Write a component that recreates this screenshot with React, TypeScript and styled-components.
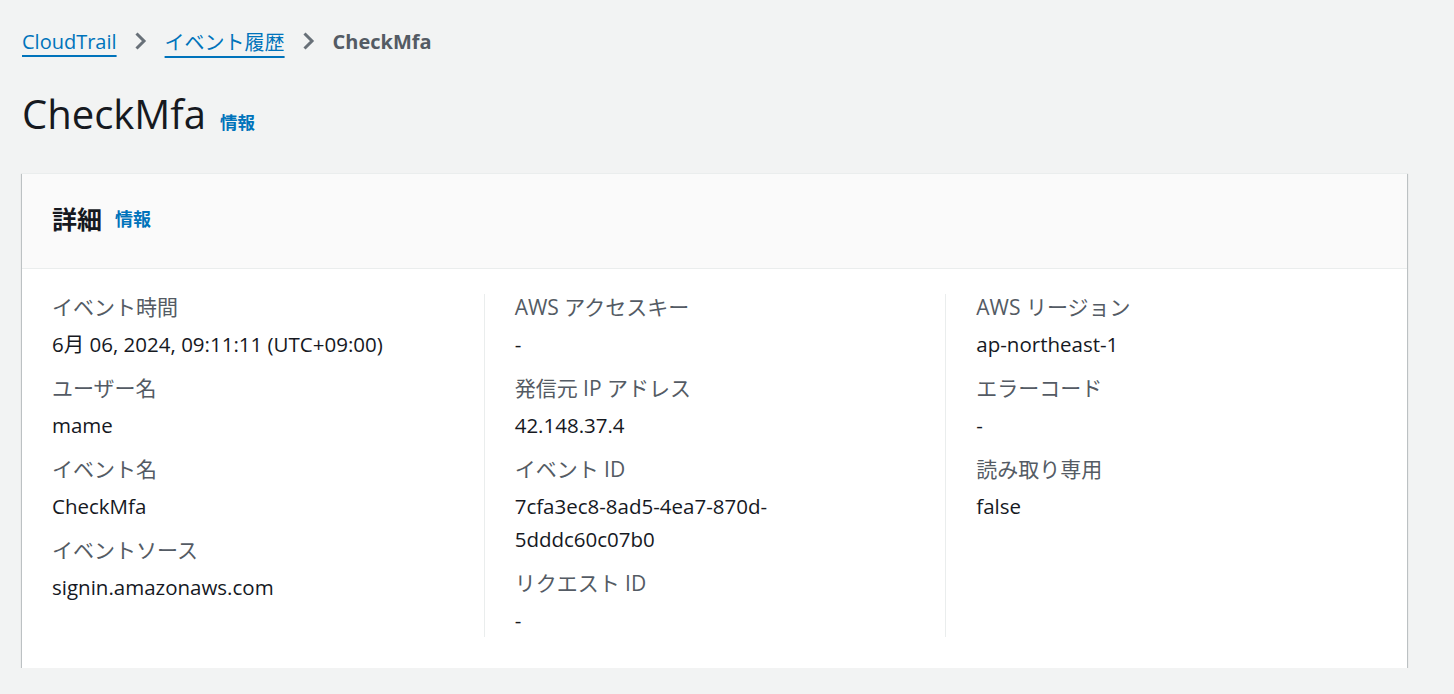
import React from "react";
import styled, { createGlobalStyle } from "styled-components";

const FONT = `"Open Sans", "Noto Sans CJK JP", sans-serif`;

const Global = createGlobalStyle`
  html, body { margin: 0; padding: 0; background: #f2f3f3; }
  body { font-family: ${FONT}; color: #16191f; }
`;

const Page = styled.div`
  padding: 0 47px 0 22px;
  display: flex;
  flex-direction: column;
`;

const Breadcrumbs = styled.nav`
  display: flex;
  align-items: center;
  height: 30px;
  margin-top: 26px;
  font-size: 20px;
  gap: 16px;
`;

const Crumb = styled.a`
  color: #0073bb;
  text-decoration: underline;
  text-decoration-thickness: 2px;
  text-underline-offset: 6px;
  cursor: pointer;
`;

const Current = styled.span`
  color: #545b64;
  font-weight: 700;
`;

const Chevron = () => (
  <svg width="16" height="20" viewBox="0 0 16 20" fill="none">
    <path d="M3.5 2.5l7.5 7.5-7.5 7.5" stroke="#687078" strokeWidth="3" strokeLinecap="butt" strokeLinejoin="miter" />
  </svg>
);

const TitleRow = styled.div`
  display: flex;
  align-items: baseline;
  gap: 14px;
  margin-top: 33px;
  height: 50px;
`;

const Title = styled.h1`
  margin: 0;
  font-size: 40px;
  line-height: 50px;
  font-weight: 400;
  color: #16191f;
`;

const InfoLink = styled.a<{ $size?: number }>`
  color: #0073bb;
  font-weight: 700;
  font-size: ${(p) => p.$size ?? 17.5}px;
  cursor: pointer;
`;

const Card = styled.section`
  margin-top: 34px;
  background: #fff;
  border-top: 1px solid #eaeded;
  box-shadow: 0 1px 1px 0 rgba(0, 28, 36, 0.5), 1px 1px 1px 0 rgba(0, 28, 36, 0.15),
    -1px 1px 1px 0 rgba(0, 28, 36, 0.15);
`;

const CardHeader = styled.header`
  height: 95px;
  box-sizing: border-box;
  background: #fafafa;
  border-bottom: 1px solid #eaeded;
  display: flex;
  align-items: center;
  padding: 0 30px 6px;
  gap: 13px;
`;

const CardTitle = styled.h2`
  margin: 0;
  font-size: 25px;
  font-weight: 700;
  color: #16191f;
`;

const CardBody = styled.div`
  display: grid;
  grid-template-columns: repeat(3, 1fr);
  padding: 25px 0 31px;
`;

const Column = styled.div<{ $divider?: boolean }>`
  padding: 0 30px;
  border-left: ${(p) => (p.$divider ? "1px solid #eaeded" : "none")};
  display: flex;
  flex-direction: column;
  gap: 14px;
`;

const Item = styled.div`
  display: flex;
  flex-direction: column;
  gap: 7px;
`;

const Label = styled.div`
  font-size: 21px;
  line-height: 27px;
  color: #545b64;
`;

const Value = styled.div`
  font-size: 20.5px;
  line-height: 33px;
  color: #16191f;
  max-width: 380px;
  word-break: break-word;
`;

const columns: [string, string][][] = [
  [
    ["イベント時間", "6月 06, 2024, 09:11:11 (UTC+09:00)"],
    ["ユーザー名", "mame"],
    ["イベント名", "CheckMfa"],
    ["イベントソース", "signin.amazonaws.com"],
  ],
  [
    ["AWS アクセスキー", "-"],
    ["発信元 IP アドレス", "42.148.37.4"],
    ["イベント ID", "7cfa3ec8-8ad5-4ea7-870d-5dddc60c07b0"],
    ["リクエスト ID", "-"],
  ],
  [
    ["AWS リージョン", "ap-northeast-1"],
    ["エラーコード", "-"],
    ["読み取り専用", "false"],
  ],
];

export default function App() {
  return (
    <>
      <Global />
      <Page>
        <Breadcrumbs>
          <Crumb>CloudTrail</Crumb>
          <Chevron />
          <Crumb>イベント履歴</Crumb>
          <Chevron />
          <Current>CheckMfa</Current>
        </Breadcrumbs>
        <TitleRow>
          <Title>CheckMfa</Title>
          <InfoLink>情報</InfoLink>
        </TitleRow>
        <Card>
          <CardHeader>
            <CardTitle>詳細</CardTitle>
            <InfoLink $size={18}>情報</InfoLink>
          </CardHeader>
          <CardBody>
            {columns.map((col, i) => (
              <Column key={i} $divider={i > 0}>
                {col.map(([k, v]) => (
                  <Item key={k}>
                    <Label>{k}</Label>
                    <Value>{v}</Value>
                  </Item>
                ))}
              </Column>
            ))}
          </CardBody>
        </Card>
      </Page>
    </>
  );
}
